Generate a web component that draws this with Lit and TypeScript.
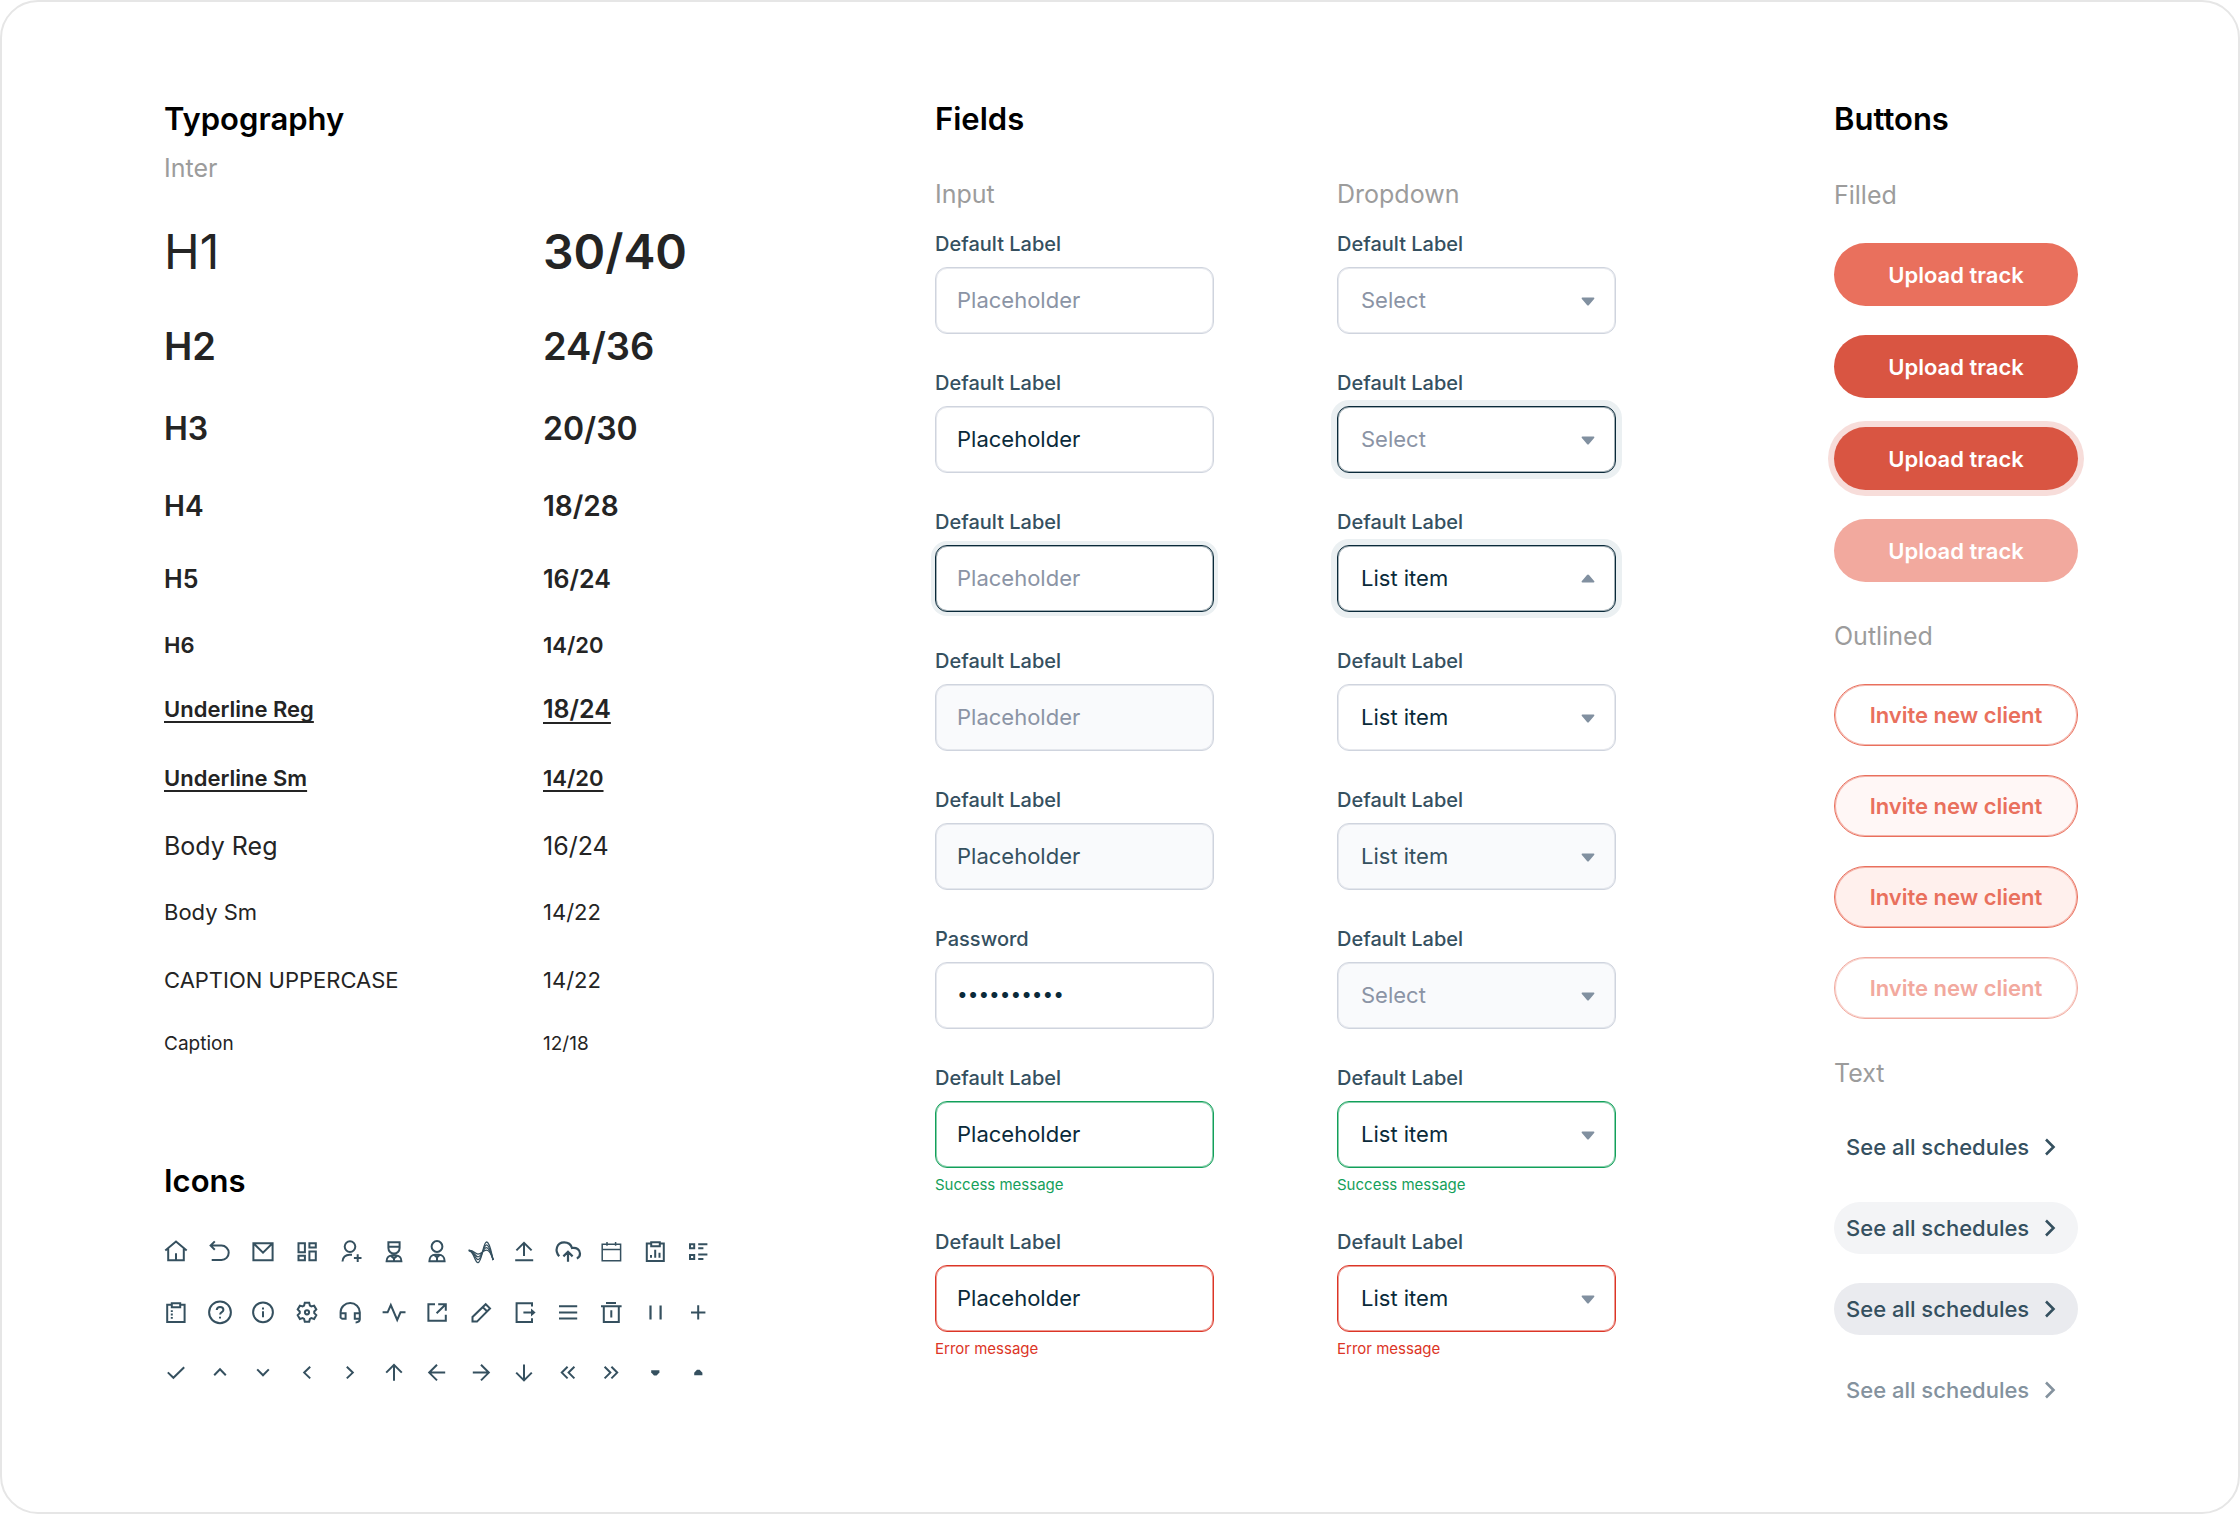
import { LitElement, html, css, svg, nothing } from "lit";
import { customElement, property } from "lit/decorators.js";
import { classMap } from "lit/directives/class-map.js";

type Drawing = ReturnType<typeof svg>;

const icons: Array<[string, Drawing]> = [
  ["Home", svg`<path d="M1.3 11.6 12 2.6l10.7 9M4.2 9.6v11.7h15.6V9.6M12 14.3v7"/>`],
  ["Undo", svg`<path d="M6.8 2.4 2.6 6.6l4.2 4.2M2.6 6.6h10.9a7.2 7.2 0 0 1 0 14.4H3.7"/>`],
  ["Mail", svg`<path d="M2.4 4.2h19.2v17H2.4zM3 4.8l9 8.9 9-8.9"/>`],
  ["Dashboard", svg`<path d="M3.5 4.2h6.4v9H3.5zM14.4 4.2h6.4v4.4h-6.4zM3.5 16.8h6.4v4.4H3.5zM14.4 12.4h6.4v8.8h-6.4z"/>`],
  ["Add user", svg`<circle cx="12" cy="7.6" r="5.3"/><path d="M4.5 22.6c0-4.3 3.2-6.9 7-6.9H14M19.7 15.3v7.6M15.9 19.1h7.6"/>`],
  ["Nurse", svg`<path d="M6.4 3.2h11.2V9a5.6 5.6 0 0 1-11.2 0zM6.4 7.8h11.2M4.6 22.2c0-3.6 2.4-5.6 5.4-5.6h4c3 0 5.4 2 5.4 5.6zM12 18.5v3.6M9 16.9l3 2.6 3-2.6"/>`],
  ["Client", svg`<circle cx="12" cy="7.5" r="5.4"/><path d="M4.4 22.2c0-4 2.6-6.4 5.8-6.4h3.6c3.2 0 5.8 2.4 5.8 6.4zM12 17.6v4.5M9.4 16l2.6 2.4 2.6-2.4"/>`],
  ["Waves", svg`<g stroke-width="1.3"><path d="M-.2 11.5c5.2 0 5.7 12.2 9.2 12.2 4 0 5-20.7 8.6-20.7 3.4 0 4.9 12 6.6 18"/><path d="M-.2 11.5C5 11.5 6 20.6 9 20.6c4 0 5.3-14.8 8.5-14.8 3 0 4.9 9.2 6.7 15.2"/><path d="M-.2 11.5c4.5-.4 6.4 6.4 9.2 6.4 3.6 0 5.2-9.3 8.4-9.3 2.8 0 4.9 6.4 6.8 12.4"/><path d="M-.2 11.5c4.5-.8 6.4 3.6 9.2 3.6 3.6 0 5.2-3.9 8.4-3.9 2.8 0 4.9 3.8 6.8 9.8"/></g>`],
  ["Upload", svg`<path d="M4.4 11.4 12 3.8l7.6 7.6M12 3.8V17M3.2 21.2h18"/>`],
  ["Cloud upload", svg`<path stroke-width="2.2" d="M3.2 17.2C-1.6 11.8.6 3.4 8.2 3.4c4.2 0 6.8 2.4 7.8 5.6 4.4-.8 8 1.6 8 5.6 0 2.4-1.2 4.2-3.2 4.8M12 22.8V13M7.4 17.4l4.6-4.6 4.6 4.6"/>`],
  ["Calendar", svg`<path stroke-width="1.5" d="M3.2 5.2h18.4v16.5H3.2zM3.2 10.6h18.4M8 3v3.8M16.6 3v3.8"/>`],
  ["Report", svg`<path d="M8.2 4.6H3.8v17.5h17V4.6h-4.2M8.2 3.2h8.6v4H8.2zM8 16v2.8M12.2 10.8v8M16.5 13.8v5"/>`],
  ["List", svg`<path d="M4 5.3h4.2v4H4zM4 16h4.2v4H4zM12.2 5.3h9.2M12.2 9.3h5.2M12.2 15.6h9.2M12.2 20h5.2"/>`],
  ["Clipboard", svg`<path d="M7.8 4.8H3.2V22h17.4V4.8h-4.4M7.8 3.2h8.4v4H7.8z"/><path stroke-dasharray="1.8 1.6" d="M7.8 10.2v8.6"/>`],
  ["Help", svg`<circle cx="12" cy="12.3" r="10.9"/><path d="M8.7 10c.2-1.8 1.6-2.9 3.4-2.9s3.3 1.1 3.3 2.8c0 2.3-3.3 2-3.3 4.5M12 16.8v1.8"/>`],
  ["Info", svg`<circle cx="12" cy="12.3" r="9.9"/><path d="M12 11.2v6M12 7.6v1.8"/>`],
  ["Settings", svg`<path d="M9.8 2.8h4.4l.7 2.8 1.45.85 2.75-.8 2.2 3.8-2.05 2v1.7l2.05 2-2.2 3.8-2.75-.8L14.9 19l-.7 2.8H9.8L9.1 19l-1.45-.85-2.75.8-2.2-3.8 2.05-2v-1.7l-2.05-2 2.2-3.8 2.75.8 1.45-.85z"/><circle cx="12" cy="12.3" r="2.1"/>`],
  ["Support", svg`<path d="M2.6 13.4v-1.2a9.6 9.2 0 0 1 19.2 0v6.6c0 2.2-1.4 3.6-4.2 3.6M2.6 13.2h5v5.6H4.2l-1.6-1.2zM21.8 13.2h-5v5.6h5z"/>`],
  ["Activity", svg`<path d="M.6 12.3h5L8.8 5l6.4 15 3.3-7.7h5"/>`],
  ["Open", svg`<path d="M10 4.2H3.4v16.6h17.4v-6M13.2 4.2h7.6v6.6M20.8 4.2l-9.2 9"/>`],
  ["Edit", svg`<path d="M3.5 21.6V17L16.7 4.2 21 8.4 8 21.6zM13.7 7.1l4.3 4.2"/>`],
  ["Log out", svg`<path d="M20 6.6V3.2H4.6V22H20v-3.8M11.4 12.5h9"/><path fill="currentColor" stroke="none" d="M19 8.6l4.6 3.9-4.6 3.9z"/>`],
  ["Menu", svg`<path d="M3 6.2h18.2M3 12.4h18.2M3 18.6h18.2"/>`],
  ["Delete", svg`<path d="M7 3h10M2 6.3h20.6M4.8 6.3V22h15V6.3M12.3 10.2v7.2"/>`],
  ["Pause", svg`<path stroke-width="2.2" d="M7.5 5.6v14M17.6 5.6v14"/>`],
  ["Add", svg`<path d="M5 12.4h14.4M12.2 5.2v14.4"/>`],
  ["Check", svg`<path d="M3.8 11.4l5.6 5.4L20.2 6.2"/>`],
  ["Up", svg`<path d="M6.2 14.2 12 8.3l5.8 5.9"/>`],
  ["Down", svg`<path d="M6.2 8.4 12 14.3l5.8-5.9"/>`],
  ["Left", svg`<path d="M15.2 5.8 9.2 11.6l6 5.8"/>`],
  ["Right", svg`<path d="M8.8 5.8l6 5.8-6 5.8"/>`],
  ["Arrow up", svg`<path d="M4.2 11.6 12 3.8l7.8 7.8M12 3.8v16"/>`],
  ["Arrow left", svg`<path d="M12 3.8 4.2 11.6l7.8 7.8M4.2 11.6h16"/>`],
  ["Arrow right", svg`<path d="M12 3.8l7.8 7.8-7.8 7.8M19.8 11.6h-16"/>`],
  ["Arrow down", svg`<path d="M4.2 11.6l7.8 7.8 7.8-7.8M12 19.4v-16"/>`],
  ["First", svg`<path d="M11.6 5.8 5.8 11.6l5.8 5.8M18.4 5.8l-5.8 5.8 5.8 5.8"/>`],
  ["Last", svg`<path d="M12.4 5.8l5.8 5.8-5.8 5.8M5.6 5.8l5.8 5.8-5.8 5.8"/>`],
  ["Caret down", svg`<path fill="currentColor" stroke="none" d="M8.2 9.2h8.2v2.4l-2.8 3h-2.6l-2.8-3z"/>`],
  ["Caret up", svg`<path fill="currentColor" stroke="none" d="M8.2 14.2h8.2v-2.4l-2.8-3h-2.6l-2.8 3z"/>`],
];

interface Specimen {
  name: string;
  size: string;
  style: string;
}

const specimens: Specimen[] = [
  { name: "H1", size: "30/40", style: "h1" },
  { name: "H2", size: "24/36", style: "h2" },
  { name: "H3", size: "20/30", style: "h3" },
  { name: "H4", size: "18/28", style: "h4" },
  { name: "H5", size: "16/24", style: "h5" },
  { name: "H6", size: "14/20", style: "h6" },
  { name: "Underline Reg", size: "18/24", style: "under-reg" },
  { name: "Underline Sm", size: "14/20", style: "under-sm" },
  { name: "Body Reg", size: "16/24", style: "body-reg" },
  { name: "Body Sm", size: "14/22", style: "body-sm" },
  { name: "CAPTION UPPERCASE", size: "14/22", style: "body-sm" },
  { name: "Caption", size: "12/18", style: "caption" },
];

interface Field {
  label?: string;
  kind?: "text" | "password" | "select";
  value?: string;
  hint?: string;
  state?: "focus" | "success" | "error";
  open?: boolean;
  disabled?: boolean;
  message?: string;
}

const inputs: Field[] = [
  { hint: "Placeholder" },
  { value: "Placeholder" },
  { hint: "Placeholder", state: "focus" },
  { hint: "Placeholder", disabled: true },
  { value: "Placeholder", disabled: true },
  { label: "Password", kind: "password", value: "password10" },
  { value: "Placeholder", state: "success", message: "Success message" },
  { value: "Placeholder", state: "error", message: "Error message" },
];

const dropdowns: Field[] = [
  { hint: "Select" },
  { hint: "Select", state: "focus" },
  { value: "List item", state: "focus", open: true },
  { value: "List item" },
  { value: "List item", disabled: true },
  { hint: "Select", disabled: true },
  { value: "List item", state: "success", message: "Success message" },
  { value: "List item", state: "error", message: "Error message" },
];

@customElement("form-field")
export class FormField extends LitElement {
  @property({ attribute: false }) field: Field = {};

  static styles = css`
    :host {
      display: flex;
      flex-direction: column;
    }
    .label {
      margin-bottom: 9px;
      font-size: 20px;
      font-weight: 500;
      line-height: 28px;
      color: #35505f;
    }
    .box {
      display: grid;
      align-items: center;
    }
    .control {
      --edge: #cfd4de;
      --edge-soft: #cfd4de80;
      --ring: 0px;
      grid-area: 1 / 1;
      box-sizing: border-box;
      width: 100%;
      height: 67px;
      margin: 0;
      padding: 0 21px 2px;
      border: 1px solid var(--edge);
      border-radius: 12px;
      outline: none;
      appearance: none;
      background: #fff;
      box-shadow: inset 0 0 0 1px var(--edge-soft), 0 0 0 var(--ring) #ebf0f2;
      font: inherit;
      font-size: 22px;
      color: #0a2a3a;
      opacity: 1;
    }
    .select {
      padding: 0 48px 2px 23px;
    }
    .password {
      font-size: 19px;
    }
    .control::placeholder,
    .hinting {
      color: #8b94a5;
      opacity: 1;
    }
    .control:disabled {
      background: #f9fafc;
      opacity: 1;
    }
    .control:disabled:not(.hinting) {
      color: #35505f;
    }
    .focus {
      --edge: #0a2a3a;
      --edge-soft: #0a2a3a60;
      --ring: 4px;
    }
    .select.focus {
      --ring: 6px;
    }
    .control.success {
      --edge: #12a05a;
      --edge-soft: #12a05a80;
    }
    .control.error {
      --edge: #dc3526;
      --edge-soft: #dc352680;
    }
    .caret {
      grid-area: 1 / 1;
      justify-self: end;
      width: 14px;
      height: 10px;
      margin-right: 21px;
      fill: #8190a0;
      pointer-events: none;
    }
    .message {
      margin: 9px 0 0;
      font-size: 15px;
      line-height: 16px;
    }
    .message.success {
      color: #14a05a;
    }
    .message.error {
      color: #dc3526;
    }
  `;

  private control(f: Field) {
    const classes = classMap({
      control: true,
      select: f.kind === "select",
      password: f.kind === "password",
      hinting: !f.value,
      [f.state ?? "plain"]: true,
    });
    const described = f.message ? "message" : nothing;
    if (f.kind === "select") {
      return html`<select id="control" class=${classes} ?disabled=${f.disabled} aria-describedby=${described}>
          <option>${f.value ?? f.hint}</option>
        </select>
        <svg class="caret" viewBox="0 0 14 10" aria-hidden="true">
          ${f.open
            ? svg`<path d="M1.4 8.6h11.2c.8 0 1.1-.9.5-1.5L8 1a1.4 1.4 0 0 0-2 0L.9 7.1c-.6.6-.3 1.5.5 1.5z"/>`
            : svg`<path d="M1.4 1.4h11.2c.8 0 1.1.9.5 1.5L8 9a1.4 1.4 0 0 1-2 0L.9 2.9c-.6-.6-.3-1.5.5-1.5z"/>`}
        </svg>`;
    }
    return html`<input
      id="control"
      class=${classes}
      type=${f.kind ?? "text"}
      .value=${f.value ?? ""}
      placeholder=${f.hint ?? nothing}
      ?disabled=${f.disabled}
      aria-describedby=${described}
    />`;
  }

  render() {
    const f = this.field;
    return html`
      <label class="label" for="control">${f.label ?? "Default Label"}</label>
      <div class="box">${this.control(f)}</div>
      ${f.message ? html`<p id="message" class="message ${f.state}">${f.message}</p>` : nothing}
    `;
  }
}

@customElement("app-root")
export class AppRoot extends LitElement {
  static styles = css`
    :host {
      display: block;
      font-family: Inter, "Liberation Sans", sans-serif;
      color: #242424;
    }
    .page {
      box-sizing: border-box;
      display: grid;
      grid-template-columns: minmax(0, 771fr) minmax(0, 899fr) 244px;
      min-height: 100vh;
      padding: 92px 160px 90px 162px;
      border: 2px solid #e6e6e6;
      border-radius: 38px;
      background: #fff;
    }
    .title {
      margin: 0;
      font-size: 31px;
      font-weight: 600;
      line-height: 50px;
      color: #000;
    }
    .sub {
      margin: 0;
      font-size: 25px;
      font-weight: 400;
      line-height: 38px;
      color: #9c9c9c;
    }
    .family {
      margin: 5px 0 11px;
    }

    .specimens {
      border-collapse: collapse;
      text-align: left;
    }
    .specimens th,
    .specimens td {
      padding: 0;
      font-weight: 400;
      vertical-align: middle;
    }
    .specimens th {
      width: 379px;
    }
    .specimens .h1 { height: 106px; font-size: 48px; }
    .specimens .h2 { height: 84px; font-size: 38px; }
    .specimens .h3 { height: 80px; font-size: 32px; }
    .specimens .h4 { height: 76px; font-size: 28px; }
    .specimens .h5 { height: 70px; font-size: 25px; }
    .specimens .h6 { height: 62px; font-size: 22px; }
    .specimens .under-reg { height: 66px; font-size: 22px; }
    .specimens .under-reg td { font-size: 25px; }
    .specimens .under-sm { height: 72px; font-size: 22px; }
    .specimens .body-reg { height: 64px; font-size: 25px; }
    .specimens .body-sm { height: 68px; font-size: 22px; }
    .specimens .caption { height: 58px; font-size: 19px; }
    .specimens .h1 td,
    .specimens .h2 > *,
    .specimens .h3 > *,
    .specimens .h4 > *,
    .specimens .h5 > *,
    .specimens .h6 > *,
    .specimens .under-reg > *,
    .specimens .under-sm > * {
      font-weight: 600;
    }
    .under-reg > *,
    .under-sm > * {
      text-decoration: underline;
      text-decoration-thickness: 2px;
      text-decoration-skip-ink: none;
      text-underline-offset: 4px;
    }

    .icons-title {
      margin-top: 84px;
    }
    .icons {
      display: grid;
      grid-template-columns: repeat(13, 24px);
      justify-content: space-between;
      row-gap: 37px;
      width: 546px;
      margin: 33px 0 0;
      padding: 0;
      list-style: none;
    }
    .icon {
      display: block;
      width: 24px;
      height: 24px;
      overflow: visible;
      fill: none;
      stroke: currentColor;
      stroke-width: 2;
      color: #35505f;
    }

    .fields {
      display: grid;
      grid-template-columns: 279px 279px;
      column-gap: 123px;
      margin-top: 31px;
    }
    .column {
      display: flex;
      flex-direction: column;
      gap: 35px;
    }
    .column .sub {
      margin-bottom: -18px;
    }

    .group {
      display: flex;
      flex-direction: column;
      gap: 29px;
      margin-top: 35px;
    }
    .group.first {
      margin-top: 32px;
    }
    .button {
      --edge: #e9705d;
      --edge-soft: #e9705d80;
      box-sizing: border-box;
      height: 63px;
      margin: 0;
      padding: 0 13px;
      border: 0;
      border-radius: 32px;
      background: #e9705d;
      font: inherit;
      font-size: 22px;
      font-weight: 600;
      color: #fff;
    }
    .filled.hover,
    .filled.pressed {
      background: #d95542;
    }
    .filled.pressed {
      box-shadow: 0 0 0 6px #f7ddda;
    }
    .filled:disabled {
      background: #f2a99e;
    }
    .outlined {
      height: 62px;
      border: 1px solid var(--edge);
      background: #fff;
      box-shadow: inset 0 0 0 1px var(--edge-soft);
      color: #e9705d;
    }
    .outlined.hover {
      background: #fff7f6;
    }
    .outlined.pressed {
      background: #fff0ed;
    }
    .outlined:disabled {
      --edge: #f2a99e;
      --edge-soft: #f2a99e80;
      color: #f2a99e;
    }
    .text {
      display: flex;
      align-items: center;
      justify-content: space-between;
      height: 52px;
      padding: 0 21px 0 12px;
      background: #fff;
      font-weight: 500;
      color: #35505f;
    }
    .text.hover {
      background: #f3f4f6;
    }
    .text.pressed {
      background: #eaebef;
    }
    .text:disabled {
      color: #84929e;
    }
    .chevron {
      width: 14px;
      height: 18px;
      fill: none;
      stroke: currentColor;
      stroke-width: 2.6;
    }
  `;

  private column(name: string, fields: Field[], select = false) {
    return html`<div class="column">
      <h3 class="sub">${name}</h3>
      ${fields.map((f) => html`<form-field .field=${select ? { ...f, kind: "select" } : f}></form-field>`)}
    </div>`;
  }

  private group(name: string, kind: string, label: string) {
    const states = ["", "hover", "pressed", "disabled"];
    return html`<div class="group ${kind === "filled" ? "first" : ""}">
      <h3 class="sub">${name}</h3>
      ${states.map(
        (s) => html`<button type="button" class="button ${kind} ${s}" ?disabled=${s === "disabled"}>
          ${label}${kind === "text"
            ? html`<svg class="chevron" viewBox="0 0 14 18" aria-hidden="true"><path d="M3 1.5 10.5 9 3 16.5" /></svg>`
            : nothing}
        </button>`
      )}
    </div>`;
  }

  render() {
    return html`<main class="page">
      <section>
        <h2 class="title">Typography</h2>
        <p class="sub family">Inter</p>
        <table class="specimens">
          <tbody>
            ${specimens.map(
              (s) => html`<tr class=${s.style}>
                <th scope="row">${s.name}</th>
                <td>${s.size}</td>
              </tr>`
            )}
          </tbody>
        </table>
        <h2 class="title icons-title">Icons</h2>
        <ul class="icons">
          ${icons.map(
            ([name, drawing]) => html`<li>
              <svg class="icon" viewBox="0 0 24 24" role="img" aria-label=${name}>${drawing}</svg>
            </li>`
          )}
        </ul>
      </section>
      <section>
        <h2 class="title">Fields</h2>
        <div class="fields">${this.column("Input", inputs)} ${this.column("Dropdown", dropdowns, true)}</div>
      </section>
      <section>
        <h2 class="title">Buttons</h2>
        ${this.group("Filled", "filled", "Upload track")}
        ${this.group("Outlined", "outlined", "Invite new client")}
        ${this.group("Text", "text", "See all schedules")}
      </section>
    </main>`;
  }
}
